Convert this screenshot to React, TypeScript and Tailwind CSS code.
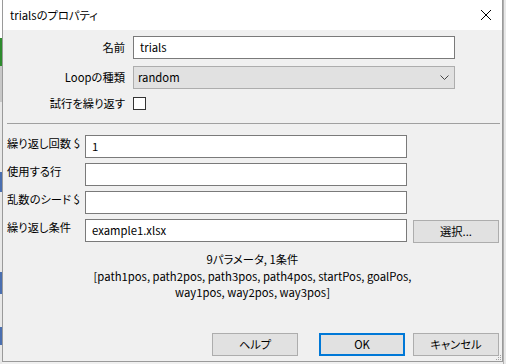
import React from "react";

const font = { fontFamily: '"Noto Sans CJK JP", "Noto Sans", sans-serif' };

function Btn({ label, primary }: { label: string; primary?: boolean }) {
  return (
    <div
      className={
        "w-[86px] h-[23px] flex items-center justify-center text-[11.3px] text-[#000] bg-[#e1e1e1] " +
        (primary ? "border-2 border-[#0078d7]" : "border border-[#adadad]")
      }
    >
      {label}
    </div>
  );
}

function LowerRow({ label, value, button }: { label: string; value?: string; button?: boolean }) {
  return (
    <div className="flex items-start h-[23px]">
      <div className="w-[82px] pl-[4px] text-[11.3px] leading-[15px] pt-[1px] text-[#000] whitespace-pre">{label}</div>
      <div className="w-[322px] h-[23px] bg-white border border-[#7a7a7a] flex items-center pl-[6px] text-[11.3px] text-[#000]">
        {value}
      </div>
      {button && (
        <div className="ml-[6px] mt-[1px]">
          <Btn label="選択..." />
        </div>
      )}
    </div>
  );
}

export default function App() {
  return (
    <div className="w-[506px] h-[364px] flex overflow-hidden bg-[#f0f0f0] [font-feature-settings:'palt']" style={font}>
      {/* left background strip */}
      <div className="w-[2px] h-full flex flex-col">
        <div className="h-[38px] bg-white" />
        <div className="h-[28px] bg-[#2e8b2e]" />
        <div className="h-[36px] bg-[#c8c8c8]" />
        <div className="h-[70px] bg-[#e8e8e8]" />
        <div className="h-[20px] bg-[#4a6fb0]" />
        <div className="h-[80px] bg-[#e8e8e8]" />
        <div className="h-[22px] bg-[#4a6fb0]" />
        <div className="h-[33px] bg-[#e8e8e8]" />
        <div className="h-[18px] bg-[#4a6fb0]" />
        <div className="flex-1 bg-[#e8e8e8]" />
      </div>

      {/* dialog */}
      <div className="w-[501px] h-[362px] flex flex-col border-l border-r border-b border-[#9a9a9a] bg-[#f0f0f0] relative">
        {/* title bar */}
        <div className="h-[30px] bg-white flex items-center justify-between pl-[7px] pr-[8px]">
          <span className="text-[11.3px] text-[#000]">trialsのプロパティ</span>
          <svg width="12" height="12" viewBox="0 0 12 12" className="mr-[2px]">
            <path d="M1 1 L11 11 M11 1 L1 11" stroke="#000" strokeWidth="1" fill="none" />
          </svg>
        </div>

        {/* top section */}
        <div className="flex flex-col mt-[6px]">
          <div className="flex items-center h-[23px]">
            <div className="w-[122px] text-right text-[11.3px] text-[#000]">名前</div>
            <div className="ml-[8px] w-[322px] h-[23px] bg-white border border-[#7a7a7a] flex items-center pl-[6px] text-[11.3px] text-[#000]">
              trials
            </div>
          </div>
          <div className="flex items-center h-[23px] mt-[7px]">
            <div className="w-[122px] text-right text-[11.3px] text-[#000]">Loopの種類</div>
            <div className="ml-[8px] w-[322px] h-[23px] bg-[#e1e1e1] border border-[#adadad] flex items-center justify-between pl-[4px] pr-[5px] text-[11.3px] text-[#000]">
              <span>random</span>
              <svg width="9" height="5" viewBox="0 0 9 5">
                <path d="M0.5 0.5 L4.5 4.5 L8.5 0.5" stroke="#444" strokeWidth="1" fill="none" />
              </svg>
            </div>
          </div>
          <div className="flex items-center h-[13px] mt-[8px]">
            <div className="w-[122px] text-right text-[11.3px] text-[#000] leading-[13px]">試行を繰り返す</div>
            <div className="ml-[8px] w-[13px] h-[13px] bg-white border border-[#333]" />
          </div>
        </div>

        {/* separator */}
        <div className="ml-[4px] w-[493px] h-[1px] bg-[#a0a0a0] mt-[13px]" />

        {/* lower section */}
        <div className="flex flex-col gap-[5px] mt-[11px]">
          <LowerRow label="繰り返し回数 $" value="1" />
          <LowerRow label="使用する行" />
          <LowerRow label="乱数のシード $" />
          <LowerRow label="繰り返し条件" value="example1.xlsx" button />
        </div>

        {/* info */}
        <div className="mt-[9px] flex flex-col items-center text-[11.3px] leading-[16.5px] text-[#000]">
          <div>9パラメータ, 1条件</div>
          <div>[path1pos, path2pos, path3pos, path4pos, startPos, goalPos,</div>
          <div>way1pos, way2pos, way3pos]</div>
        </div>

        <div className="flex-1" />

        {/* buttons */}
        <div className="flex justify-end items-center pr-[3px] mb-[5px]">
          <Btn label="ヘルプ" />
          <div className="w-[21px]" />
          <Btn label="OK" primary />
          <div className="w-[8px]" />
          <Btn label="キャンセル" />
        </div>

        {/* resize grip */}
        <svg width="6" height="6" viewBox="0 0 6 6" className="absolute right-[0px] bottom-[0px]">
          <rect x="4" y="0" width="1" height="1" fill="#a0a0a0" />
          <rect x="2" y="2" width="1" height="1" fill="#a0a0a0" />
          <rect x="4" y="2" width="1" height="1" fill="#a0a0a0" />
          <rect x="0" y="4" width="1" height="1" fill="#a0a0a0" />
          <rect x="2" y="4" width="1" height="1" fill="#a0a0a0" />
          <rect x="4" y="4" width="1" height="1" fill="#a0a0a0" />
        </svg>
      </div>

      {/* right background strip */}
      <div className="w-[3px] h-full flex flex-col bg-[#e8e8e8] border-l border-[#b0b0b0]" />
    </div>
  );
}
